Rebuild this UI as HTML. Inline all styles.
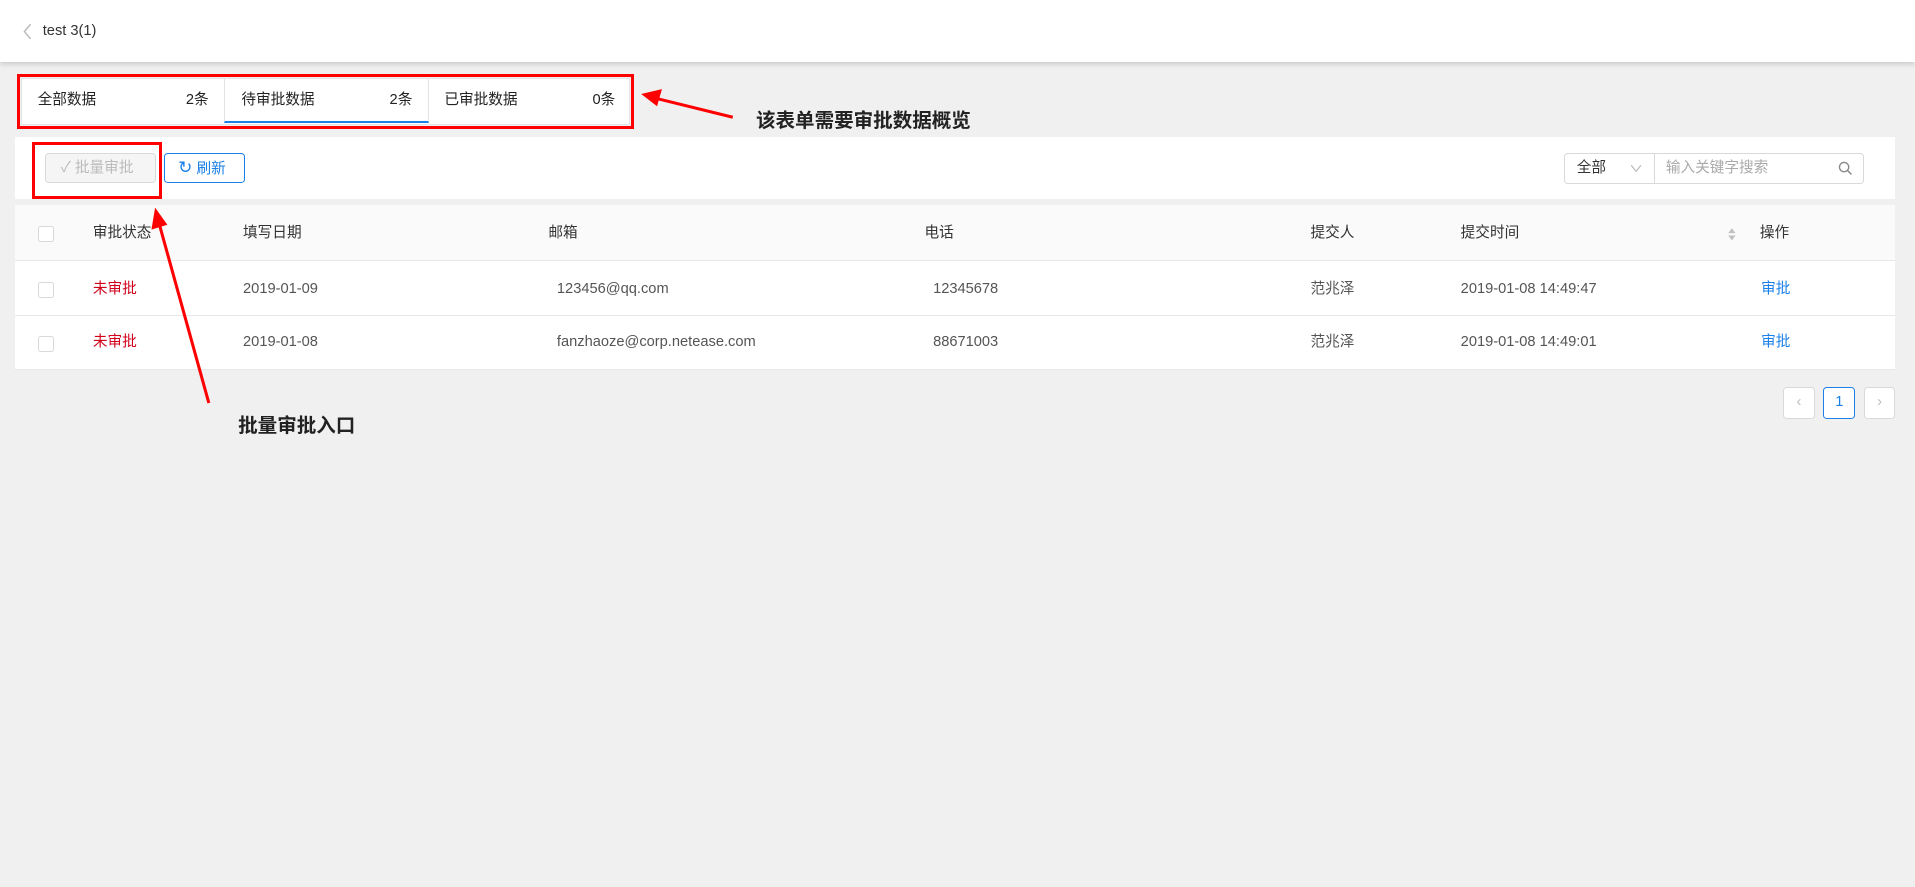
<!DOCTYPE html>
<html><head><meta charset="utf-8"><style>
html,body{margin:0;padding:0;}
body{width:1915px;height:886px;overflow:hidden;background:#f0f0f0;font-family:"Liberation Sans","Noto Sans CJK SC",sans-serif;}
#w{zoom:1.2213;width:1568px;height:726px;position:relative;color:#333;font-size:12px;line-height:16px;}
.a{position:absolute;}
.hdr{left:0;top:0;width:1568px;height:51px;background:#fff;box-shadow:0 2px 4px rgba(0,0,0,.15);}
.tabs{left:17px;top:64px;width:499px;height:38px;background:#fff;border:1px solid #e4e4e4;box-sizing:border-box;}
.tab{top:0;height:36px;width:166px;line-height:36px;font-size:12px;color:#222;}
.tab span{position:absolute;right:13px;top:0;}
.rb{border:3px solid #f00;box-sizing:border-box;}
.panel{left:12px;background:#fff;width:1540px;}
.btn{height:25px;box-sizing:border-box;border-radius:3px;line-height:23px;font-size:12px;}
.th{top:168px;height:46px;line-height:46px;}
.r1{top:215px;height:44px;line-height:44px;color:#555;}
.r2{top:259px;height:44px;line-height:44px;color:#555;}
.cb{width:13px;height:13px;border:1px solid #d9d9d9;box-sizing:border-box;background:#fff;border-radius:2px;}
.pg{width:26px;height:26px;border:1px solid #d9d9d9;box-sizing:border-box;border-radius:3px;background:#fff;text-align:center;line-height:24px;color:#bbb;}
.note{font-weight:bold;font-size:16px;color:#222;line-height:20px;}
</style></head><body><div id="w">
<div class="a hdr"></div>
<svg class="a" style="left:18px;top:19px" width="10" height="14"><path d="M7 1 L2 7 L7 13" fill="none" stroke="#bbb" stroke-width="1.2"/></svg>
<div class="a" style="left:35px;top:18px;font-size:12px;color:#333">test 3(1)</div>

<div class="a tabs">
 <div class="a tab" style="left:0"><span style="position:absolute;left:13px;right:auto">全部数据</span><span>2条</span></div>
 <div class="a tab" style="left:166px;border-left:1px solid #e4e4e4;border-right:1px solid #e4e4e4;border-bottom:2px solid #1a7fe8;height:34px"><span style="position:absolute;left:13px;right:auto">待审批数据</span><span>2条</span></div>
 <div class="a tab" style="left:333px"><span style="position:absolute;left:13px;right:auto">已审批数据</span><span>0条</span></div>
</div>
<div class="a rb" style="left:14px;top:61px;width:505px;height:45px"></div>

<div class="a panel" style="top:112px;height:51px"></div>
<div class="a btn" style="left:37px;top:125px;width:91px;border:1px solid #d9d9d9;background:#f5f5f5;color:#bbb;padding-left:12px">✓ 批量审批</div>
<div class="a btn" style="left:134px;top:125px;width:67px;border:1px solid #1a7fe8;background:#fff;color:#1a7fe8;padding-left:11px"><span style="font-size:14px">↻</span> 刷新</div>
<div class="a rb" style="left:26px;top:116px;width:107px;height:47px"></div>

<div class="a" style="left:1281px;top:125px;width:245px;height:26px;border:1px solid #d9d9d9;box-sizing:border-box;border-radius:3px;background:#fff"></div>
<div class="a" style="left:1354px;top:125px;width:1px;height:26px;background:#d9d9d9"></div>
<div class="a" style="left:1291px;top:125px;line-height:26px;color:#333">全部</div>
<svg class="a" style="left:1335px;top:134px" width="10" height="8"><path d="M1 1 L5 6 L9 1" fill="none" stroke="#bbb"/></svg>
<div class="a" style="left:1364px;top:125px;line-height:26px;color:#aaa">输入关键字搜索</div>
<svg class="a" style="left:1505px;top:132px" width="12" height="12"><circle cx="5" cy="5" r="3.8" fill="none" stroke="#888" stroke-width="1.1"/><path d="M8 8 L11 11" stroke="#888" stroke-width="1.2"/></svg>

<div class="a panel" style="top:168px;height:135px"></div>
<div class="a" style="left:12px;top:168px;width:1540px;height:46px;background:#fafafa;border-bottom:1px solid #e8e8e8;box-sizing:border-box"></div>
<div class="a" style="left:12px;top:258px;width:1540px;height:1px;background:#e8e8e8"></div>
<div class="a" style="left:12px;top:302px;width:1540px;height:1px;background:#e8e8e8"></div>

<div class="a cb" style="left:31px;top:185px"></div>
<div class="a th" style="left:76px">审批状态</div>
<div class="a th" style="left:199px">填写日期</div>
<div class="a th" style="left:449px">邮箱</div>
<div class="a th" style="left:757px">电话</div>
<div class="a th" style="left:1073px">提交人</div>
<div class="a th" style="left:1196px">提交时间</div>
<svg class="a" style="left:1414px;top:186px" width="8" height="12"><path d="M4 1 L7 5 L1 5Z M4 11 L7 7 L1 7Z" fill="#c0c0c0"/></svg>
<div class="a th" style="left:1441px">操作</div>

<div class="a cb" style="left:31px;top:231px"></div>
<div class="a r1" style="left:76px;color:#d0021b">未审批</div>
<div class="a r1" style="left:199px">2019-01-09</div>
<div class="a r1" style="left:456px">123456@qq.com</div>
<div class="a r1" style="left:764px">12345678</div>
<div class="a r1" style="left:1073px">范兆泽</div>
<div class="a r1" style="left:1196px">2019-01-08 14:49:47</div>
<div class="a r1" style="left:1442px;color:#1a7fe8">审批</div>

<div class="a cb" style="left:31px;top:275px"></div>
<div class="a r2" style="left:76px;color:#d0021b">未审批</div>
<div class="a r2" style="left:199px">2019-01-08</div>
<div class="a r2" style="left:456px">fanzhaoze@corp.netease.com</div>
<div class="a r2" style="left:764px">88671003</div>
<div class="a r2" style="left:1073px">范兆泽</div>
<div class="a r2" style="left:1196px">2019-01-08 14:49:01</div>
<div class="a r2" style="left:1442px;color:#1a7fe8">审批</div>

<div class="a pg" style="left:1460px;top:317px">&lsaquo;</div>
<div class="a pg" style="left:1493px;top:317px;border-color:#1a7fe8;color:#1a7fe8">1</div>
<div class="a pg" style="left:1526px;top:317px">&rsaquo;</div>

<svg class="a" style="left:0;top:0" width="1568" height="726">
<line x1="600" y1="96" x2="535" y2="80" stroke="#f00" stroke-width="2.5"/>
<path d="M525 77 L542 73 L538 87Z" fill="#f00"/>
<line x1="171" y1="330" x2="130" y2="182" stroke="#f00" stroke-width="2.5"/>
<path d="M127 170 L124 188 L137 184Z" fill="#f00"/>
</svg>
<div class="a note" style="left:619px;top:89px">该表单需要审批数据概览</div>
<div class="a note" style="left:195px;top:339px">批量审批入口</div>
</div></body></html>
